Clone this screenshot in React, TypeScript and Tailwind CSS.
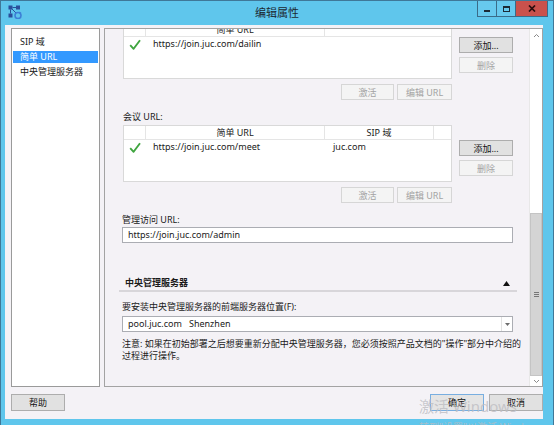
import React from 'react'

function Btn({
  children,
  w,
  kind = 'normal',
}: {
  children: React.ReactNode
  w: string
  kind?: 'normal' | 'disabled' | 'default'
}) {
  const look =
    kind === 'disabled'
      ? 'border-[#d6d6d6] bg-[#f4f4f4] text-[#a3a3a3]'
      : kind === 'default'
        ? 'border-[#78aee0] bg-[#e4e4e4] text-[#111]'
        : 'border-[#adadad] bg-[#e1e1e1] text-[#111]'
  return (
    <div className={`flex h-[16px] shrink-0 items-center justify-center border text-[9px] leading-none ${w} ${look}`}>
      {children}
    </div>
  )
}

function Check() {
  return (
    <svg width="12" height="11" viewBox="0 0 12 11">
      <path d="M1.2 6.2 L4.6 9.8 L11 1.2" fill="none" stroke="#3fa53f" strokeWidth="1.9" strokeLinejoin="round" />
    </svg>
  )
}

function UrlTable({ url, domain, showDomainCol }: { url: string; domain?: string; showDomainCol: boolean }) {
  return (
    <div className="ml-[1px] h-[57px] w-[329px] border border-[#d9d9d9] bg-white">
      <div className="flex h-[14px] border-b border-[#e5e5e5] text-[9px] leading-[13px] text-[#1a1a1a]">
        <div className="w-[22px] border-r border-[#e5e5e5]" />
        <div className="w-[179px] border-r border-[#e5e5e5] text-center">简单 URL</div>
        {showDomainCol ? (
          <>
            <div className="w-[109px] border-r border-[#e5e5e5] text-center">SIP 域</div>
            <div className="flex-1" />
          </>
        ) : (
          <div className="flex-1" />
        )}
      </div>
      <div className="flex h-[14px] items-center text-[9px] text-[#1a1a1a]">
        <div className="flex w-[22px] justify-center">
          <Check />
        </div>
        <div className="w-[179px] pl-[7px]">{url}</div>
        {domain && <div className="pl-[8px]">{domain}</div>}
      </div>
    </div>
  )
}

function UrlBlock({ url, domain, showDomainCol }: { url: string; domain?: string; showDomainCol: boolean }) {
  return (
    <div className="flex gap-[7px]">
      <div className="flex flex-col">
        <UrlTable url={url} domain={domain} showDomainCol={showDomainCol} />
        <div className="mt-[5px] flex justify-end gap-[3px]">
          <Btn w="w-[53px]" kind="disabled">激活</Btn>
          <Btn w="w-[55px]" kind="disabled">编辑 URL</Btn>
        </div>
      </div>
      <div className="flex flex-col gap-[4px] pt-[15px]">
        <Btn w="w-[54px]">添加...</Btn>
        <Btn w="w-[54px]" kind="disabled">删除</Btn>
      </div>
    </div>
  )
}

function Scrollbar() {
  return (
    <div className="flex w-[13px] shrink-0 flex-col border-l border-[#e8e8e8] bg-white">
      <div className="flex h-[13px] items-center justify-center">
        <svg width="7" height="5" viewBox="0 0 7 5">
          <path d="M1 4 L3.5 1.5 L6 4" fill="none" stroke="#8a8a8a" strokeWidth="1" />
        </svg>
      </div>
      <div className="flex-1" />
      <div className="flex h-[163px] flex-col items-center justify-center gap-[1px] border border-[#c4c4c4] bg-[#d4d4d4]">
        <div className="h-px w-[5px] bg-[#777]" />
        <div className="h-px w-[5px] bg-[#777]" />
        <div className="h-px w-[5px] bg-[#777]" />
      </div>
      <div className="flex h-[10px] items-center justify-center">
        <svg width="7" height="5" viewBox="0 0 7 5">
          <path d="M1 1 L3.5 3.5 L6 1" fill="none" stroke="#8a8a8a" strokeWidth="1" />
        </svg>
      </div>
    </div>
  )
}

function TitleIcon() {
  return (
    <svg width="14" height="14" viewBox="0 0 14 14">
      <rect x="0.5" y="0.5" width="4" height="4" fill="#2a4f9a" />
      <rect x="8" y="0.5" width="4" height="4" fill="#2a4f9a" />
      <rect x="0.5" y="8.5" width="4" height="4" fill="#2a4f9a" />
      <path d="M4.5 2.5 H8 M2.5 4.5 V8.5 M4 4 L8 8" stroke="#2a4f9a" strokeWidth="1" />
      <circle cx="10" cy="10.5" r="3" fill="none" stroke="#3d7fd6" strokeWidth="1.6" />
      <path d="M11.5 6.5 L13.5 8 L11 9" fill="#3d7fd6" />
    </svg>
  )
}

export default function App() {
  return (
    <div className="relative h-[425px] w-[554px] overflow-hidden font-['Noto_Sans','Noto_Sans_CJK_SC',sans-serif]">
      <div className="flex h-full w-full flex-col border-x border-t border-[#3f7898] bg-[#5fc6ec]">
        {/* Title bar */}
        <div className="grid h-[24px] shrink-0 grid-cols-[1fr_auto_1fr]">
          <div className="pl-[7px] pt-[4px]">
            <TitleIcon />
          </div>
          <div className="pt-[4px] text-[11px] leading-[15px] text-[#1d2a33]">编辑属性</div>
          <div className="flex justify-end pr-[5px]">
            <div className="flex h-[16px] border border-t-0 border-[#3a6b88]">
              <div className="flex w-[19px] items-end justify-center border-r border-[#3a6b88] bg-[#67c9ee] pb-[4px]">
                <div className="h-[2px] w-[6px] bg-[#1b2a36]" />
              </div>
              <div className="flex w-[19px] items-center justify-center border-r border-[#3a6b88] bg-[#67c9ee]">
                <div className="h-[6px] w-[7px] border border-t-2 border-[#1b2a36]" />
              </div>
              <div className="flex w-[31px] items-center justify-center bg-[#c9514c]">
                <svg width="8" height="7" viewBox="0 0 8 7">
                  <path d="M1 0.5 L7 6.5 M7 0.5 L1 6.5" stroke="#2a0d0d" strokeWidth="1.7" />
                </svg>
              </div>
            </div>
          </div>
        </div>

        {/* Client area */}
        <div className="ml-[4px] flex h-[394px] w-[538px] shrink-0 flex-col bg-[#f4f2f6] pb-[8px] pl-[6px] pt-[3px] text-[#1a1a1a]">
          <div className="flex h-[359px] gap-[4px]">
            {/* Navigation list */}
            <div className="w-[89px] shrink-0 border border-[#9a9a9a] bg-white px-[1px] pt-[7px] text-[9px] leading-[12px]">
              <div className="mb-[3px] pl-[7px]">SIP 域</div>
              <div className="mb-[3px] bg-[#3399ff] pl-[7px] text-white">简单 URL</div>
              <div className="pl-[7px]">中央管理服务器</div>
            </div>

            {/* Settings panel, scrolled to the bottom */}
            <div className="flex flex-1 border border-[#a3a3a3]">
              <div className="flex-1 overflow-hidden">
                <div className="-mt-[7px] flex flex-col pl-[17px] text-[9px] leading-[12px]">
                  <UrlBlock url="https://join.juc.com/dailin" showDomainCol={false} />

                  <div className="ml-[1px] mt-[11px]">会议 URL:</div>
                  <div className="mt-[2px]">
                    <UrlBlock url="https://join.juc.com/meet" domain="juc.com" showDomainCol />
                  </div>

                  <div className="mt-[11px]">管理访问 URL:</div>
                  <div className="mt-[1px] flex h-[16px] w-[391px] items-center border border-[#abadb3] bg-white pl-[5px]">
                    https://join.juc.com/admin
                  </div>

                  <div className="-ml-[3px] mt-[34px] flex w-[398px] items-center justify-between border-b-2 border-[#d8d6da] pb-[1px] pl-[6px] pr-[7px]">
                    <span className="font-bold">中央管理服务器</span>
                    <svg width="7" height="5" viewBox="0 0 7 5">
                      <path d="M0 5 L3.5 0 L7 5 Z" fill="#111" />
                    </svg>
                  </div>

                  <div className="mt-[9px]">要安装中央管理服务器的前端服务器位置(F):</div>
                  <div className="mt-[3px] flex h-[16px] w-[391px] items-stretch border border-[#abadb3] bg-white">
                    <div className="flex flex-1 items-center whitespace-pre pl-[5px]">pool.juc.com   Shenzhen</div>
                    <div className="flex w-[11px] items-center justify-center border-l border-[#e2e2e2]">
                      <svg width="5" height="3" viewBox="0 0 5 3">
                        <path d="M0 0 L5 0 L2.5 3 Z" fill="#6d6d6d" />
                      </svg>
                    </div>
                  </div>

                  <div className="mt-[6px] whitespace-nowrap leading-[12px]">
                    注意: 如果在初始部署之后想要重新分配中央管理服务器，您必须按照产品文档的"操作"部分中介绍的
                    <br />
                    过程进行操作。
                  </div>
                </div>
              </div>
              <Scrollbar />
            </div>
          </div>

          {/* Footer buttons */}
          <div className="mt-[7px] flex h-[17px] justify-between">
            <Btn w="w-[54px] h-[17px]">帮助</Btn>
            <div className="flex gap-[5px]">
              <Btn w="w-[54px] h-[17px]" kind="default">确定</Btn>
              <Btn w="w-[54px] h-[17px]">取消</Btn>
            </div>
          </div>
        </div>
      </div>

      {/* Activation watermark */}
      <div className="pointer-events-none absolute left-[419px] top-[397px] text-[#bdbdc2]/80">
        <div className="text-[15px] leading-[18px]">激活 Windows</div>
        <div className="mt-[6px] text-[10px] leading-[13px]">转到"设置"以激活 Windows。</div>
      </div>
    </div>
  )
}
